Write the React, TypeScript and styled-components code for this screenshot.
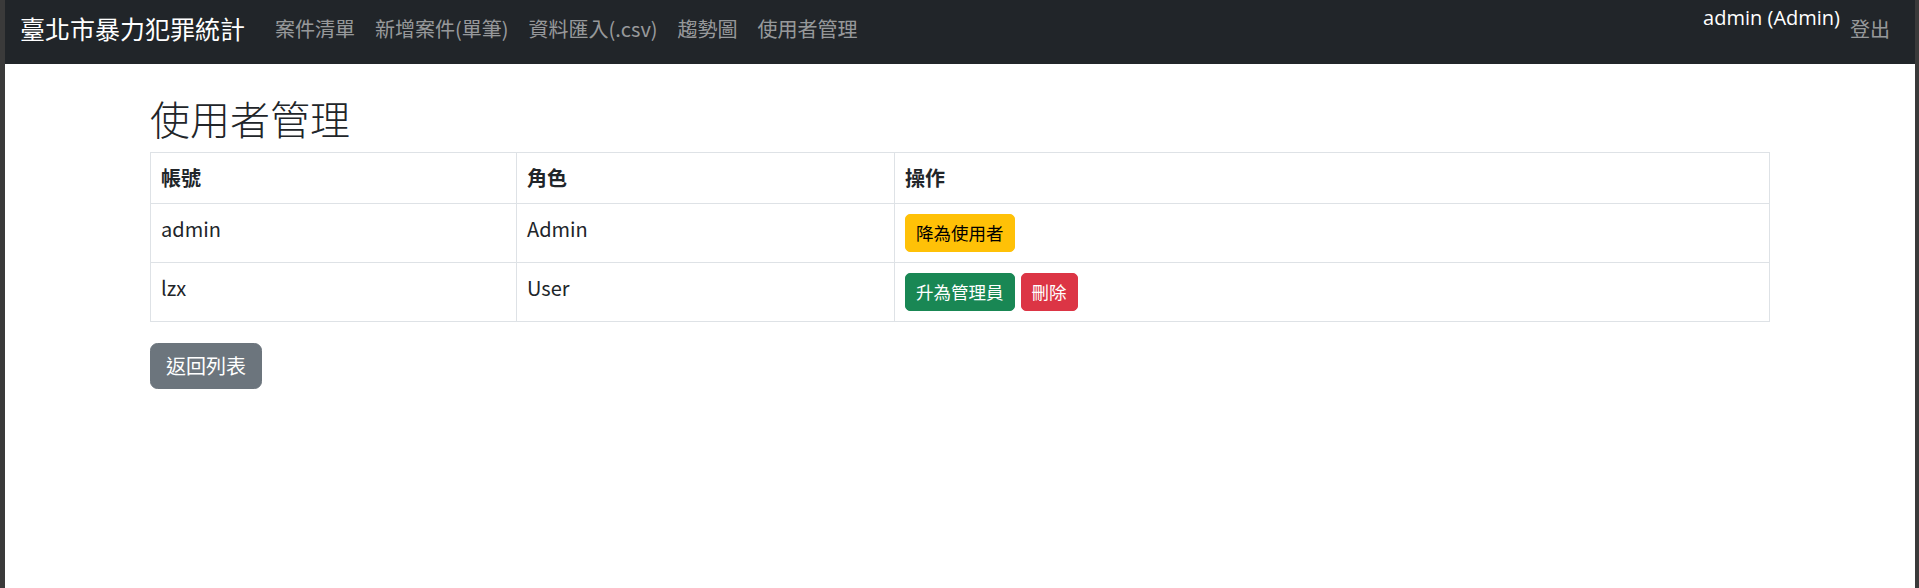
import React from "react";
import styled, { createGlobalStyle } from "styled-components";

const GlobalStyle = createGlobalStyle`
  html, body { margin: 0; padding: 0; background: #3a3a3a; }
  body {
    font-family: "Noto Sans CJK TC", sans-serif;
    color: #212529;
  }
  * { box-sizing: border-box; }
`;

const Window = styled.div`
  width: 1919px;
  min-height: 588px;
  border-left: 5px solid #3a3a3a;
  border-right: 4px solid #3a3a3a;
  background: #fff;
`;

const Navbar = styled.nav`
  height: 64px;
  background: #212529;
  display: flex;
  align-items: flex-start;
  padding: 9px 15px 0 15px;
`;

const Brand = styled.a`
  font-size: 25px;
  line-height: 38px;
  color: #fff;
  margin-right: 20px;
  text-decoration: none;
  white-space: nowrap;
`;

const NavList = styled.div`
  display: flex;
`;

const NavLink = styled.a`
  display: block;
  padding: 5px 10px 0 10px;
  font-size: 20px;
  line-height: 30px;
  color: rgba(255, 255, 255, 0.55);
  text-decoration: none;
  white-space: nowrap;
`;

const UserArea = styled.div`
  margin-left: auto;
  display: flex;
  align-items: flex-start;
`;

const UserText = styled.span`
  font-family: "Open Sans", "Noto Sans CJK TC", sans-serif;
  font-size: 20px;
  line-height: 30px;
  margin-top: -6px;
  color: #fff;
  white-space: nowrap;
`;

const Container = styled.main`
  max-width: 1650px;
  margin: 0 auto;
  padding: 0 15px;
`;

const Title = styled.h2`
  margin: 30px 0 10px;
  font-size: 40px;
  font-weight: 300;
  line-height: 48px;
  color: #212529;
`;

const Table = styled.table`
  width: 100%;
  border-collapse: collapse;
  margin-bottom: 20px;
  border: 1px solid #dee2e6;
  font-size: 20px;
  line-height: 30px;
`;

const Th = styled.th<{ $w?: number }>`
  ${(p) => (p.$w ? `width: ${p.$w}px;` : "")}
  text-align: left;
  font-weight: 700;
  padding: 10px;
  border: 1px solid #dee2e6;
  vertical-align: top;
`;

const Td = styled.td`
  padding: 10px;
  border: 1px solid #dee2e6;
  vertical-align: top;
`;

const Actions = styled.div`
  display: flex;
  gap: 6px;
`;

const variants: Record<string, { bg: string; fg: string }> = {
  warning: { bg: "#ffc107", fg: "#000" },
  success: { bg: "#198754", fg: "#fff" },
  danger: { bg: "#dc3545", fg: "#fff" },
  secondary: { bg: "#6c757d", fg: "#fff" },
};

const SmallButton = styled.button<{ $v: string }>`
  font-family: "Noto Sans CJK TC", sans-serif;
  font-size: 17.5px;
  line-height: 26px;
  padding: 5px 10px;
  border: 1px solid ${(p) => variants[p.$v].bg};
  background: ${(p) => variants[p.$v].bg};
  color: ${(p) => variants[p.$v].fg};
  border-radius: 5px;
  cursor: pointer;
`;

const Button = styled.button<{ $v: string }>`
  font-family: "Noto Sans CJK TC", sans-serif;
  font-size: 20px;
  line-height: 30px;
  padding: 7px 15px;
  margin-top: 1px;
  border: 1px solid ${(p) => variants[p.$v].bg};
  background: ${(p) => variants[p.$v].bg};
  color: ${(p) => variants[p.$v].fg};
  border-radius: 7.5px;
  cursor: pointer;
`;

const users = [
  { name: "admin", role: "Admin" },
  { name: "lzx", role: "User" },
];

export default function App() {
  return (
    <>
      <GlobalStyle />
      <Window>
        <Navbar>
          <Brand href="#">臺北市暴力犯罪統計</Brand>
          <NavList>
            <NavLink href="#">案件清單</NavLink>
            <NavLink href="#">新增案件(單筆)</NavLink>
            <NavLink href="#">資料匯入(.csv)</NavLink>
            <NavLink href="#">趨勢圖</NavLink>
            <NavLink href="#">使用者管理</NavLink>
          </NavList>
          <UserArea>
            <UserText>admin (Admin)</UserText>
            <NavLink href="#">登出</NavLink>
          </UserArea>
        </Navbar>
        <Container>
          <Title>使用者管理</Title>
          <Table>
            <thead>
              <tr>
                <Th $w={366}>帳號</Th>
                <Th $w={378}>角色</Th>
                <Th>操作</Th>
              </tr>
            </thead>
            <tbody>
              {users.map((u) => (
                <tr key={u.name}>
                  <Td>{u.name}</Td>
                  <Td>{u.role}</Td>
                  <Td>
                    <Actions>
                      {u.role === "Admin" ? (
                        <SmallButton $v="warning">降為使用者</SmallButton>
                      ) : (
                        <>
                          <SmallButton $v="success">升為管理員</SmallButton>
                          <SmallButton $v="danger">刪除</SmallButton>
                        </>
                      )}
                    </Actions>
                  </Td>
                </tr>
              ))}
            </tbody>
          </Table>
          <Button $v="secondary">返回列表</Button>
        </Container>
      </Window>
    </>
  );
}
